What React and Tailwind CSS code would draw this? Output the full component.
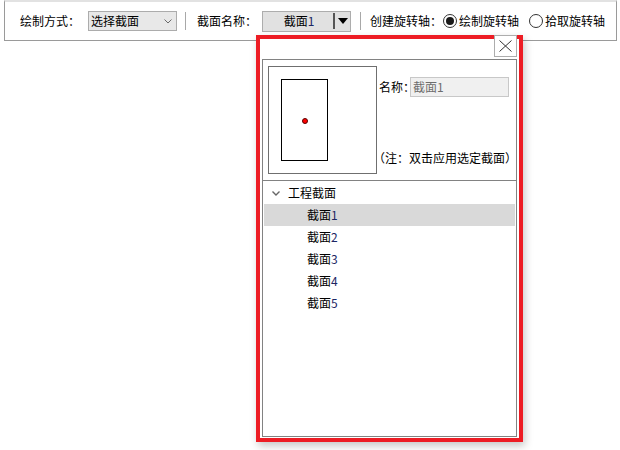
import React from "react";

const font = "font-['Noto_Sans_CJK_SC','Liberation_Sans',sans-serif]";

function Num({ children }) {
  return <span className="text-[#1c2663]">{children}</span>;
}

function Radio({ checked, label, className = "" }) {
  return (
    <div className={`flex items-center ${className}`}>
      <div className="w-[14px] h-[14px] rounded-full border border-[#333] bg-white flex items-center justify-center">
        {checked && <div className="w-[8px] h-[8px] rounded-full bg-[#1a1a1a]" />}
      </div>
      <span className="ml-[2px]">{label}</span>
    </div>
  );
}

export default function App() {
  const items = ["1", "2", "3", "4", "5"];
  return (
    <div className={`relative w-[620px] h-[450px] bg-white overflow-hidden text-[12px] leading-[16px] text-black ${font}`}>
      {/* toolbar */}
      <div className="ml-[4px] w-[613px] h-[41px] border-l border-r border-b border-[#9a9a9a] border-t-2 border-t-[#e2e2e2] flex items-center pl-[15px]">
        <span className="whitespace-nowrap">绘制方式：</span>
        <div className="ml-[8px] w-[89px] h-[20px] border border-[#acacac] bg-[#e8e8e8] flex items-center pl-[2px] pr-[4px]">
          <span className="flex-1">选择截面</span>
          <svg width="8" height="5" viewBox="0 0 8 5">
            <path d="M0.5 0.5 L4 4 L7.5 0.5" fill="none" stroke="#6a6a6a" strokeWidth="1" />
          </svg>
        </div>
        <div className="ml-[8px] w-px h-[18px] bg-[#a8a8a8]" />
        <span className="ml-[11px] whitespace-nowrap">截面名称：</span>
        <div className="ml-[5px] w-[89px] h-[21px] border border-[#adadad] bg-[#e1e1e1] flex items-center">
          <div className="flex-1 flex justify-center pl-[2px]">
            <span>截面<Num>1</Num></span>
          </div>
          <div className="w-[2px] h-[16px] bg-[#555]" />
          <div className="w-[15px] flex justify-center">
            <svg width="10" height="6" viewBox="0 0 10 6">
              <path d="M0 0 L10 0 L5 6 Z" fill="#000" />
            </svg>
          </div>
        </div>
        <div className="ml-[9px] w-px h-[18px] bg-[#a8a8a8]" />
        <span className="ml-[9px] whitespace-nowrap">创建旋转轴：</span>
        <Radio checked label="绘制旋转轴" className="ml-[1px]" />
        <Radio label="拾取旋转轴" className="ml-[10px]" />
      </div>

      {/* popup */}
      <div className="absolute left-[256px] top-[35px] w-[267px] h-[407px] border-4 border-[#ed1c24] bg-white shadow-[2px_4px_8px_rgba(0,0,0,0.22)] flex flex-col">
        <div className="h-[20px] shrink-0" />
        <div className="mx-[2px] mb-[1px] flex-1 border border-[#828282] flex flex-col">
          <div className="flex pl-[5px] pt-[6px] pb-[6px] border-b border-[#828282]">
            <div className="w-[109px] h-[108px] border border-[#6f6f6f] pl-[12px] pt-[12px] shrink-0">
              <div className="relative w-[47px] h-[82px] border border-black">
                <div className="absolute left-[20px] top-[38px] w-[6px] h-[6px] rounded-full bg-[#ff0000] border border-[#5a0000]" />
              </div>
            </div>
            <div className="ml-[2px] flex flex-col">
              <div className="mt-[11px] flex items-center">
                <span className="w-[31px] whitespace-nowrap">名称：</span>
                <div className="w-[99px] h-[20px] border border-[#c8c8c8] bg-[#f0f0f0] text-[#6d6d6d] flex items-center pl-[2px]">
                  截面1
                </div>
              </div>
              <div className="mt-[53px] ml-[-6px] whitespace-nowrap">（注：双击应用选定截面）</div>
            </div>
          </div>
          <div className="pt-[1px] px-[1px]">
            <div className="h-[22px] flex items-center">
              <div className="w-[24px] flex justify-start pl-[8px]">
                <svg width="8" height="5" viewBox="0 0 8 5">
                  <path d="M0.5 0.5 L4 4 L7.5 0.5" fill="none" stroke="#666" strokeWidth="1.4" />
                </svg>
              </div>
              <span>工程截面</span>
            </div>
            {items.map((n, i) => (
              <div
                key={n}
                className={`h-[22px] flex items-center pl-[43px] ${i === 0 ? "bg-[#d9d9d9]" : ""}`}
              >
                <span>截面<Num>{n}</Num></span>
              </div>
            ))}
          </div>
        </div>
      </div>

      {/* close button over the frame */}
      <div className="absolute left-[494px] top-[35px] w-[23px] h-[22px] border border-[#adadad] bg-white flex items-center justify-center">
        <svg width="13" height="12" viewBox="0 0 13 12">
          <path d="M0.5 0.5 L12.5 11.5 M12.5 0.5 L0.5 11.5" stroke="#333" strokeWidth="1" fill="none" />
        </svg>
      </div>
    </div>
  );
}
